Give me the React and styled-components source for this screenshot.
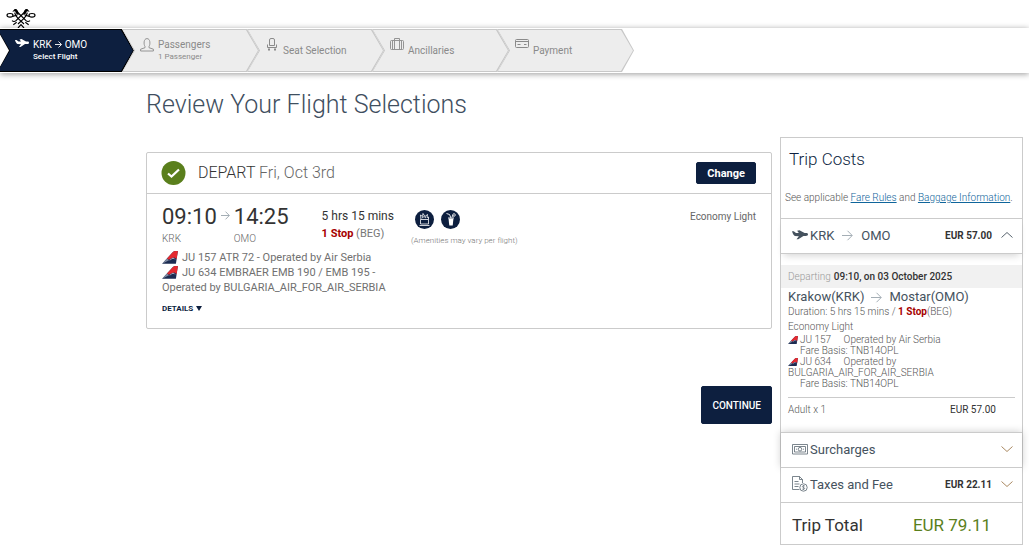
import React, { useState } from 'react';
import styled, { createGlobalStyle, css } from 'styled-components';

const navy = '#0d1f3f';
const line = '#cbcbcb';

const GlobalStyle = createGlobalStyle`
  * {
    box-sizing: border-box;
  }
  body {
    margin: 0;
    background: #fff;
    color: #666;
    font-family: Roboto, "Liberation Sans", sans-serif;
    font-size: 12px;
    line-height: 16px;
  }
  h1, h2, p, ol, ul {
    margin: 0;
    padding: 0;
    font-weight: 400;
  }
  button {
    font-family: inherit;
    cursor: pointer;
  }
  svg {
    display: block;
    flex: none;
  }
`;

/* ---------- header ---------- */

const Header = styled.header`
  height: 28px;
  padding: 8px 6px 0;
  overflow: hidden;
`;

const StepBar = styled.nav`
  background: #fff;
  padding: 1px 0 1px;
  overflow: hidden;
`;

const StepBarShadow = styled.div`
  box-shadow: 0 1px 6px rgba(0, 0, 0, 0.4);
`;

const StepList = styled.ol`
  display: flex;
  list-style: none;
  margin-left: -3px;
`;

const arrowShape = css`
  clip-path: polygon(0 0, calc(100% - 12px) 0, 100% 50%, calc(100% - 12px) 100%, 0 100%, 12px 50%);
`;

const Step = styled.li`
  ${arrowShape}
  width: 137px;
  height: 43px;
  margin-right: -12px;
  padding: 1px;
  background: ${({ $active }) => ($active ? '#000' : '#c8c8c8')};
`;

const StepBody = styled.div`
  ${arrowShape}
  display: flex;
  gap: 4px;
  height: 100%;
  padding: 8px 0 0 17px;
  background: ${({ $active }) => ($active ? navy : '#ededed')};
  color: ${({ $active }) => ($active ? '#fff' : '#8a8a8a')};
`;

const StepIcon = styled.span`
  display: flex;
  justify-content: center;
  width: 14px;
`;

const StepText = styled.div`
  padding-top: ${({ $single }) => ($single ? '6px' : '0')};
  font-size: 10px;
  line-height: 13px;
`;

const StepNote = styled.div`
  font-size: 8px;
  font-weight: ${({ $active }) => ($active ? 500 : 400)};
  line-height: 11px;
`;

/* ---------- page ---------- */

const Page = styled.div`
  display: grid;
  grid-template-columns: minmax(0, 1fr) 243px;
  gap: 8px;
  padding: 0 6px 0 146px;
`;

const Main = styled.main`
  padding-top: 15px;
`;

const PageTitle = styled.h1`
  color: #3f4f5f;
  font-size: 25px;
  font-weight: 300;
  line-height: 34px;
  margin-bottom: 30px;
`;

const FlightCard = styled.section`
  border: 1px solid ${line};
  border-radius: 2px;
`;

const FlightHead = styled.div`
  display: flex;
  align-items: center;
  gap: 12px;
  height: 41px;
  padding: 0 15px 0 14px;
  border-bottom: 1px solid ${line};
`;

const FlightDate = styled.h2`
  flex: 1;
  color: #666;
  font-size: 16px;
  font-weight: 300;
  line-height: 20px;

  span {
    color: #333;
  }
`;

const NavyButton = styled.button`
  border: 1px solid ${navy};
  border-radius: 2px;
  background: ${navy};
  color: #fff;
  font-size: ${({ $large }) => ($large ? '10px' : '11px')};
  font-weight: ${({ $large }) => ($large ? 500 : 700)};
  height: ${({ $large }) => ($large ? '38px' : '22px')};
  padding: 0 10px;
`;

const FlightBody = styled.div`
  display: flex;
  padding: 9px 15px 13px;
`;

const Itinerary = styled.div`
  width: 236px;
`;

const TimesRow = styled.div`
  display: flex;
  gap: 33px;
`;

const Times = styled.div`
  display: flex;
  gap: 4px;
  color: #333;

  svg {
    margin-top: 8px;
  }
`;

const Time = styled.div`
  font-size: 22px;
  line-height: 27px;
`;

const Airport = styled.div`
  color: #666;
  font-size: 10px;
  font-weight: 300;
  line-height: 17px;
`;

const Duration = styled.div`
  color: #333;
  padding-top: 5px;
  line-height: 17px;
  white-space: nowrap;
`;

const Stops = styled.div`
  color: #777;
  font-size: 11px;
`;

const Red = styled.strong`
  color: #a60000;
  font-weight: 700;
`;

const Segments = styled.div`
  padding-top: 3px;
  color: #707070;
  font-size: 11px;
  line-height: 15px;

  svg {
    display: inline-block;
    margin-right: 4px;
    vertical-align: -3px;
  }
`;

const DetailsButton = styled.button`
  display: flex;
  align-items: center;
  gap: 3px;
  margin-top: 7px;
  padding: 0;
  border: 0;
  background: none;
  color: ${navy};
  font-size: 8px;
  font-weight: 700;
  line-height: 13px;
`;

const Amenities = styled.div`
  flex: 1;
  padding: 7px 0 0 13px;
`;

const AmenityIcons = styled.div`
  display: flex;
  gap: 7px;
  padding-left: 4px;
`;

const AmenityNote = styled.p`
  padding-top: 4px;
  color: #777;
  font-size: 8px;
  font-weight: 300;
`;

const Cabin = styled.div`
  padding-top: 6px;
  font-size: 10px;
`;

const Actions = styled.div`
  display: flex;
  justify-content: flex-end;
  padding-top: 57px;
`;

/* ---------- trip costs ---------- */

const Costs = styled.aside`
  align-self: start;
  margin-top: 64px;
  border: 1px solid ${line};
`;

const CostsIntro = styled.div`
  padding: 10px 0 12px 4px;
`;

const CostsTitle = styled.h2`
  padding-left: 4px;
  color: ${navy};
  font-size: 17px;
  font-weight: 300;
  line-height: 22px;
`;

const CostsNote = styled.p`
  padding-top: 20px;
  color: #555;
  font-size: 10px;
  font-weight: 300;
  white-space: nowrap;

  a {
    color: #0f659b;
  }
`;

const CostRow = styled.button`
  display: flex;
  align-items: center;
  position: relative;
  width: 100%;
  height: ${({ $tall }) => ($tall ? '36px' : '35px')};
  padding: 0 9px 2px 11px;
  border: 0;
  border-top: 1px solid ${line};
  background: #fff;
  color: #45525e;
  font-size: 13px;
  text-align: left;
  ${({ $raised }) => $raised && 'box-shadow: 0 0 8px rgba(0, 0, 0, 0.2);'}
  ${({ $open }) => $open && `border-bottom: 1px solid ${line}; box-shadow: 0 5px 7px -3px rgba(0, 0, 0, 0.16);`}
`;

const CostLabel = styled.span`
  display: flex;
  flex: 1;
  align-items: center;
  gap: 8px;
  padding-left: 2px;
`;

const CostValue = styled.span`
  margin-right: 9px;
  color: #333;
  font-size: 10px;
  font-weight: 700;
`;

const Fare = styled.div`
  padding: 11px 0 16px;
  color: #555;
  font-size: 10px;
  font-weight: 300;
  line-height: 11px;
`;

const DepartStrip = styled.div`
  display: flex;
  align-items: center;
  gap: 3px;
  height: 23px;
  padding-left: 7px;
  background: #f1f1f1;
  color: #999;

  strong {
    color: #333;
    font-weight: 500;
  }
`;

const FareBody = styled.div`
  padding: 0 7px;
`;

const Cities = styled.div`
  display: flex;
  align-items: center;
  gap: 7px;
  color: #45525e;
  font-size: 13px;
  font-weight: 400;
  line-height: 18px;
`;

const FareCabin = styled.div`
  padding: 4px 0 2px;
`;

const FareSegment = styled.div`
  svg {
    display: inline-block;
    margin-right: 2px;
    vertical-align: -1px;
  }
`;

const Operator = styled.span`
  margin-left: 10px;
`;

const FareBasis = styled.div`
  padding-left: 12px;
`;

const Passenger = styled.div`
  display: flex;
  justify-content: space-between;
  margin-top: 8px;
  padding: 6px 19px 0 0;
  border-top: 1px solid ${line};
  line-height: 12px;

  span:last-child {
    color: #333;
    font-weight: 400;
  }
`;

const Total = styled.div`
  display: flex;
  align-items: center;
  justify-content: space-between;
  height: 42px;
  padding: 2px 31px 0 11px;
  border-top: 1px solid ${line};
  color: #333;
  font-size: 17px;

  strong {
    color: #5a7f1c;
    font-weight: 400;
  }
`;

/* ---------- drawings ---------- */

const Logo = () => (
  <svg width="30" height="21" viewBox="0 0 90 63" fill="none" stroke="#000" strokeWidth="3.500" aria-label="Air Serbia" role="img">
    <path d="M19 11l7-8h5l5 6 2 12-6-2-5-9zM71 11l-7-8h-5l-5 6-2 12 6-2 5-9z" fill="#000" stroke="none" />
    <path d="M34 12l26 26q6 5 12 0M56 12L30 38q-6 5-12 0" />
    <path d="M26 14q2 10 10 17l18 17M64 14q-2 10-10 17L36 48" />
    <ellipse cx="12" cy="22" rx="9" ry="5.500" />
    <ellipse cx="78" cy="22" rx="9" ry="5.500" />
    <path d="M20 25l14-4M70 25l-14-4M22 50l10-7M68 50l-10-7M36 60l9-10 9 10" />
  </svg>
);

const Plane = ({ size = 14 }) => (
  <svg width={size} height={size * 0.72} viewBox="0 0 28 20" fill="currentColor">
    <path d="M0 4h3l4 3h5L9 3l4-1 9 5h3c2 0 3 1 3 2.500S27 12 24 12h-4l-9 6H8l4-5.500L5 12C3 11 1 8 0 4z" />
  </svg>
);

const PersonIcon = () => (
  <svg width="14" height="14" viewBox="0 0 14 14" fill="none" stroke="currentColor" strokeWidth=".9">
    <path d="M5 8.500C3.600 6.500 3.500.6 7 .6s3.400 5.900 2 7.900v1.200l4.400 1.500v1.800H.6v-1.800L5 9.700z" />
  </svg>
);

const SeatIcon = () => (
  <svg width="10" height="14" viewBox="0 0 10 14" fill="none" stroke="currentColor">
    <path d="M2.500 7.500V2q0-1.500 1.500-1.500h2Q7.500.5 7.500 2v5.500M.5 6.500v3h9v-3M2.500 7.500h5M2 9.500v3.500M8 9.500v3.500M1 11.500h2M7 11.500h2" />
  </svg>
);

const CaseIcon = () => (
  <svg width="14" height="14" viewBox="0 0 14 14" fill="none" stroke="currentColor">
    <path d="M1.500 2.500h11q1 0 1 1v7q0 1-1 1h-11q-1 0-1-1v-7q0-1 1-1zM4.500 2.500v-2h5v2M2.500 3v8M4.500 3v8M9.500 3v8M11.500 3v8" strokeWidth=".9" />
  </svg>
);

const CardIcon = () => (
  <svg width="14" height="14" viewBox="0 0 14 14" fill="none" stroke="currentColor">
    <path d="M1.500 1.500h11q1 0 1 1v6q0 1-1 1h-11q-1 0-1-1v-6q0-1 1-1zM1 3.500h12M2.500 6.500h3M9 6.500h2.500" />
  </svg>
);

const Arrow = ({ width = 10, color = '#9aa5ad' }) => (
  <svg width={width} height={width} viewBox="0 0 10 10" fill="none" stroke={color} strokeWidth={9 / width}>
    <path d="M0 5h9M5 .7L9.300 5 5 9.300" />
  </svg>
);

const Chevron = ({ up }) => (
  <svg width="12" height="8" viewBox="0 0 12 8" fill="none" stroke={up ? '#45525e' : '#a07c50'} strokeWidth=".9">
    <path d={up ? 'M.5 6.500L6 1.500l5.500 5' : 'M.5 1.500L6 6.500l5.500-5'} />
  </svg>
);

const Tail = ({ width = 16 }) => (
  <svg width={width} height={width * 0.8} viewBox="0 0 16 13">
    <path d="M0 13L10.500 1.500Q12 0 13.500 0H16l-2 13z" fill="#1c2c52" />
    <path d="M0 13l5-5.500 2 2z" fill="#7f8aa0" />
    <path d="M5 7.500l5.500-6Q12 0 13.500 0H16l-1.200 8-2.300-1.500-2.500.5-3 2z" fill="#e52a30" />
    <path d="M8 9.500l2-2h2l1 1" fill="none" stroke="#b9c0cf" strokeWidth=".9" />
  </svg>
);

const Check = () => (
  <svg width="25" height="24" viewBox="0 0 24 24">
    <circle cx="12" cy="12" r="12" fill="#5a7f1c" />
    <path d="M6.500 12.500l3.500 3 7.500-7" fill="none" stroke="#fff" strokeWidth="2.200" />
  </svg>
);

const Snack = () => (
  <svg width="19" height="19" viewBox="0 0 19 19" fill="none" stroke="#fff" strokeWidth=".8">
    <circle cx="9.500" cy="9.500" r="9.500" fill={navy} stroke="none" />
    <path d="M5.500 9.500h8v4.500h-8zM6 9.500L5.500 5l2 1.500.5-3 2 3 2.500-2-.5 3 1.500-.5v2.500M4.500 15.500h10M7 8l2-1.500 2 1.500" />
  </svg>
);

const Drink = () => (
  <svg width="19" height="19" viewBox="0 0 19 19">
    <circle cx="9.500" cy="9.500" r="9.500" fill={navy} />
    <path d="M7.500 8.500h5l-.8 7h-3.400z" fill="#fff" />
    <path d="M7 8h6M5.500 3.500l3 1L10 8M11 7l1-2" fill="none" stroke="#fff" strokeWidth=".9" />
    <circle cx="13" cy="5" r="1.300" fill="none" stroke="#fff" strokeWidth=".8" />
  </svg>
);

const Money = () => (
  <svg width="16" height="11" viewBox="0 0 16 11" fill="none" stroke="#5b6771" strokeWidth=".8">
    <path d="M.5.500h15v9.500H.5zM2.500 2.500h11v5.500h-11z" />
    <circle cx="8" cy="5.200" r="1.800" />
    <path d="M4 5.200h1M11 5.200h1" />
  </svg>
);

const TaxSheet = () => (
  <svg width="16" height="16" viewBox="0 0 16 16" fill="none" stroke="#5b6771" strokeWidth=".8">
    <path d="M7.500 13.500H.5V.5h7l3 3V7M7.500.5v3h3M2.500 5.500h4M2.500 8h5M2.500 10.500h4" />
    <circle cx="11.500" cy="11.500" r="3.700" />
    <path d="M13 10q-1.500-.8-2.500 0t1 1.500 1 1.500-2.500 0M11.500 9v5" strokeWidth=".6" />
  </svg>
);

const steps = [
  { title: 'Passengers', note: '1 Passenger', icon: <PersonIcon /> },
  { title: 'Seat Selection', icon: <SeatIcon /> },
  { title: 'Ancillaries', icon: <CaseIcon /> },
  { title: 'Payment', icon: <CardIcon /> },
];

const fareSegments = [
  { flight: 'JU 157', operator: 'Air Serbia' },
  { flight: 'JU 634', operator: 'BULGARIA_AIR_FOR_AIR_SERBIA' },
];

const RouteTitle = styled.div`
  display: flex;
  align-items: center;
  gap: 3px;
`;

const App = () => {
  const [open, setOpen] = useState(true);

  return (
    <>
      <GlobalStyle />
      <Header>
        <Logo />
      </Header>
      <StepBarShadow>
        <StepBar aria-label="Booking steps">
          <StepList>
            <Step $active aria-current="step">
              <StepBody $active>
                <StepIcon><Plane /></StepIcon>
                <StepText>
                  <RouteTitle>KRK <Arrow width={7} color="#fff" /> OMO</RouteTitle>
                  <StepNote $active>Select Flight</StepNote>
                </StepText>
              </StepBody>
            </Step>
            {steps.map(step => (
              <Step key={step.title}>
                <StepBody>
                  <StepIcon>{step.icon}</StepIcon>
                  <StepText $single={!step.note}>
                    {step.title}
                    {step.note && <StepNote>{step.note}</StepNote>}
                  </StepText>
                </StepBody>
              </Step>
            ))}
          </StepList>
        </StepBar>
      </StepBarShadow>

      <Page>
        <Main>
          <PageTitle>Review Your Flight Selections</PageTitle>
          <FlightCard>
            <FlightHead>
              <Check />
              <FlightDate><span>DEPART</span> Fri, Oct 3rd</FlightDate>
              <NavyButton type="button">Change</NavyButton>
            </FlightHead>
            <FlightBody>
              <Itinerary>
                <TimesRow>
                  <Times>
                    <div>
                      <Time>09:10</Time>
                      <Airport>KRK</Airport>
                    </div>
                    <Arrow width={9} />
                    <div>
                      <Time>14:25</Time>
                      <Airport>OMO</Airport>
                    </div>
                  </Times>
                  <Duration>
                    5 hrs 15 mins
                    <Stops><Red>1 Stop</Red> (BEG)</Stops>
                  </Duration>
                </TimesRow>
                <Segments>
                  <div><Tail />JU 157 ATR 72 - Operated by Air Serbia</div>
                  <div><Tail />JU 634 EMBRAER EMB 190 / EMB 195 - Operated by BULGARIA_AIR_FOR_AIR_SERBIA</div>
                </Segments>
                <DetailsButton type="button">
                  DETAILS
                  <svg width="6" height="5" viewBox="0 0 6 5"><path d="M0 0h6L3 5z" fill={navy} /></svg>
                </DetailsButton>
              </Itinerary>
              <Amenities>
                <AmenityIcons>
                  <Snack />
                  <Drink />
                </AmenityIcons>
                <AmenityNote>(Amenities may vary per flight)</AmenityNote>
              </Amenities>
              <Cabin>Economy Light</Cabin>
            </FlightBody>
          </FlightCard>
          <Actions>
            <NavyButton type="button" $large>CONTINUE</NavyButton>
          </Actions>
        </Main>

        <Costs>
          <CostsIntro>
            <CostsTitle>Trip Costs</CostsTitle>
            <CostsNote>
              See applicable <a href="#fare-rules">Fare Rules</a> and <a href="#baggage">Baggage Information</a>.
            </CostsNote>
          </CostsIntro>
          <CostRow type="button" $tall $open aria-expanded={open} onClick={() => setOpen(!open)}>
            <Plane size={16} />
            <CostLabel>KRK <Arrow width={11} /> OMO</CostLabel>
            <CostValue>EUR 57.00</CostValue>
            <Chevron up={open} />
          </CostRow>
          {open && (
            <Fare>
              <DepartStrip>Departing <strong>09:10, on 03 October 2025</strong></DepartStrip>
              <FareBody>
                <Cities>Krakow(KRK) <Arrow width={11} /> Mostar(OMO)</Cities>
                <div>Duration: 5 hrs 15 mins / <Red>1 Stop</Red>(BEG)</div>
                <FareCabin>Economy Light</FareCabin>
                {fareSegments.map(s => (
                  <FareSegment key={s.flight}>
                    <Tail width={10} />{s.flight} <Operator>Operated by {s.operator}</Operator>
                    <FareBasis>Fare Basis: TNB14OPL</FareBasis>
                  </FareSegment>
                ))}
                <Passenger>
                  <span>Adult x 1</span>
                  <span>EUR 57.00</span>
                </Passenger>
              </FareBody>
            </Fare>
          )}
          <CostRow type="button" $raised>
            <Money />
            <CostLabel>Surcharges</CostLabel>
            <Chevron />
          </CostRow>
          <CostRow type="button">
            <TaxSheet />
            <CostLabel>Taxes and Fee</CostLabel>
            <CostValue>EUR 22.11</CostValue>
            <Chevron />
          </CostRow>
          <Total>
            Trip Total
            <strong>EUR 79.11</strong>
          </Total>
        </Costs>
      </Page>
    </>
  );
};

export default App;
